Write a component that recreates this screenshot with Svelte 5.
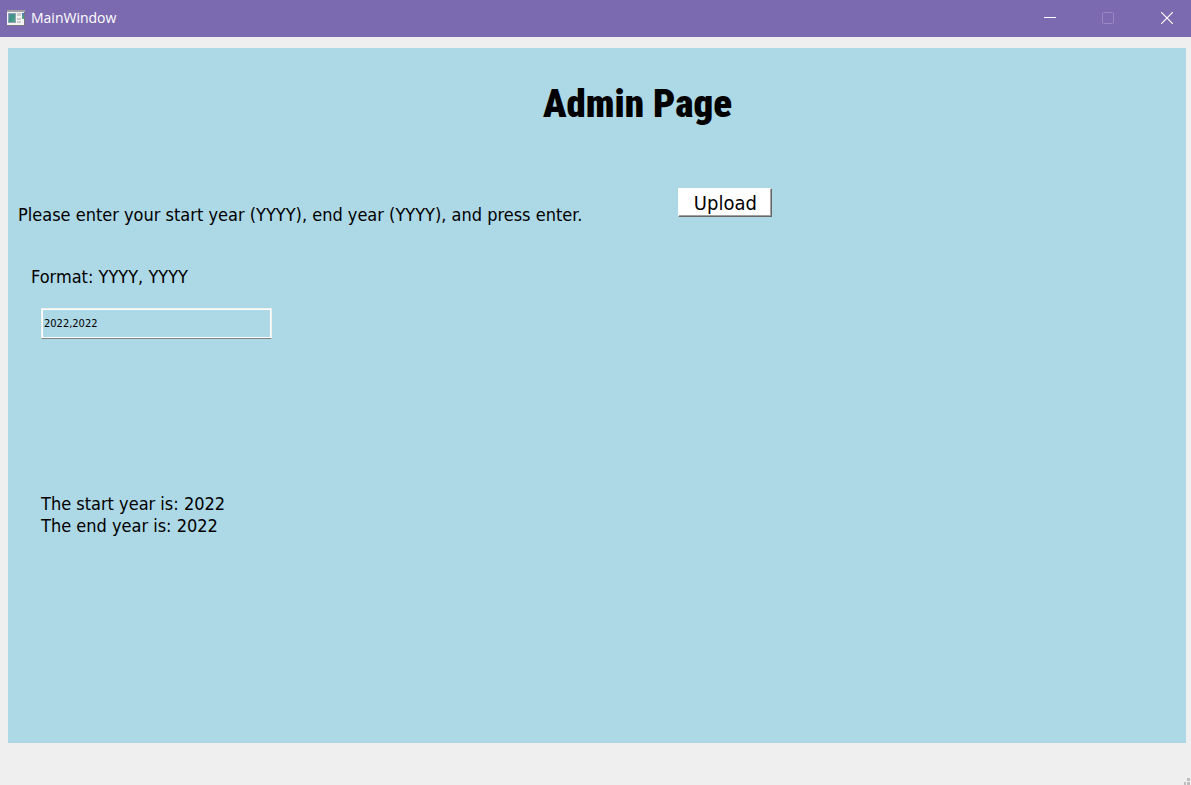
<script>
  let years = $state('2022,2022');
  let start = $state('2022');
  let end = $state('2022');

  function submit(event) {
    event.preventDefault();
    [start = '', end = ''] = years.split(',').map((part) => part.trim());
  }
</script>

<div class="window">
  <header class="titlebar">
    <svg class="app-icon" width="18" height="16" viewBox="0 0 18 16" aria-hidden="true">
      <defs>
        <linearGradient id="screen" x1="0" y1="0" x2="1" y2="1">
          <stop offset="0" stop-color="#5b83a8" />
          <stop offset="0.5" stop-color="#3f9685" />
          <stop offset="1" stop-color="#5fa98c" />
        </linearGradient>
        <linearGradient id="meter" x1="0" y1="0" x2="0" y2="1">
          <stop offset="0" stop-color="#4a73c4" />
          <stop offset="1" stop-color="#55ad68" />
        </linearGradient>
      </defs>
      <rect width="18" height="16" fill="#77777b" />
      <rect x="0" y="1" width="17" height="14" fill="#f4f4f4" />
      <rect x="0" y="0" width="18" height="2" fill="#a09fa3" />
      <rect x="1.5" y="3.500" width="7" height="9" fill="url(#screen)" stroke="#8fa4b5" stroke-width="1" />
      <path d="M10 3h4v3h-4zM10 8h4v2h-4zM10 11h4v2h-4z" fill="#cccccc" />
      <rect x="15" y="3" width="2" height="6" fill="url(#meter)" />
    </svg>
    <span class="caption">MainWindow</span>
    <div class="controls">
      <button type="button" aria-label="Minimize">
        <svg width="12" height="12" viewBox="0 0 12 12"><path d="M0 5.500h12" stroke="#fff" /></svg>
      </button>
      <button type="button" aria-label="Maximize" disabled>
        <svg width="12" height="12" viewBox="0 0 12 12"><rect x="0.5" y="0.5" width="11" height="11" rx="1" fill="none" stroke="#9988c3" /></svg>
      </button>
      <button type="button" aria-label="Close">
        <svg width="12" height="12" viewBox="0 0 12 12"><path d="M0 0l12 12M12 0L0 12" stroke="#fff" stroke-width="1.2" /></svg>
      </button>
    </div>
  </header>

  <main class="panel">
    <h1>Admin Page</h1>
    <div class="columns">
      <form onsubmit={submit}>
        <p class="prompt">Please enter your start year (YYYY), end year (YYYY), and press enter.</p>
        <label for="years">Format: YYYY, YYYY</label>
        <input id="years" type="text" bind:value={years} />
        <output for="years">
          <span>The start year is: {start}</span>
          <span>The end year is: {end}</span>
        </output>
      </form>
      <button type="button" class="upload">Upload</button>
    </div>
  </main>

  <footer class="statusbar">
    <svg width="6" height="7" viewBox="0 0 6 7" aria-hidden="true">
      <path d="M3 0h3v3h-3zM0 4h2v3h-2zM3 4h3v3h-3z" fill="#bfbfbf" />
    </svg>
  </footer>
</div>

<style>
  :global(body) {
    margin: 0;
    background: #efefef;
  }

  .window {
    display: flex;
    flex-direction: column;
    min-height: 100vh;
    background: #efefef;
    color: #000;
    font-family: "DejaVu Sans Condensed", "Noto Sans", sans-serif;
    font-size: 18px;
    line-height: 22px;
  }

  .titlebar {
    display: flex;
    align-items: center;
    box-sizing: border-box;
    height: 37px;
    padding: 0 0 2px 7px;
    background: #7c6ab0;
    color: #fff;
  }

  .caption {
    flex: 1;
    margin-left: 6px;
    font-family: "Open Sans", sans-serif;
    font-size: 14px;
    line-height: 24px;
  }

  .controls {
    display: flex;
    height: 100%;
  }

  .controls button {
    display: grid;
    place-items: center;
    width: 58px;
    padding: 0;
    border: 0;
    background: none;
  }

  .controls button:last-child {
    width: 54px;
    padding-left: 6px;
  }

  .panel {
    flex: 1;
    margin: 11px 5px 0 8px;
    background: #add8e6;
  }

  h1 {
    margin: 0;
    padding: 32px 0 0 81px;
    text-align: center;
    font-family: "Roboto Condensed", Roboto, sans-serif;
    font-size: 39px;
    font-weight: 900;
    line-height: 48px;
  }

  .columns {
    display: flex;
    align-items: flex-start;
    padding: 60px 10px 0;
    gap: 96px;
  }

  form {
    display: flex;
    flex-direction: column;
    align-items: flex-start;
    padding-top: 16px;
  }

  .prompt {
    margin: 0;
  }

  label {
    margin: 40px 0 0 13px;
  }

  input {
    box-sizing: border-box;
    width: 231px;
    height: 31px;
    margin: 20px 0 0 23px;
    padding: 0 2px;
    border: 1px solid #efefef;
    border-bottom-color: #808080;
    box-shadow: inset 0 0 0 1px #fff;
    background: transparent;
    color: inherit;
    font-family: inherit;
    font-size: 11px;
  }

  output {
    display: flex;
    flex-direction: column;
    margin: 154px 0 0 23px;
  }

  .upload {
    width: 94px;
    height: 29px;
    padding: 0;
    border: 1px solid;
    border-color: #fff #696969 #696969 #fff;
    box-shadow: inset -1px -1px #a0a0a0;
    background: #fff;
    color: inherit;
    font-family: inherit;
    font-size: 20px;
  }

  .statusbar {
    display: flex;
    align-items: flex-end;
    justify-content: flex-end;
    height: 42px;
    padding-right: 1px;
    box-sizing: border-box;
  }
</style>
